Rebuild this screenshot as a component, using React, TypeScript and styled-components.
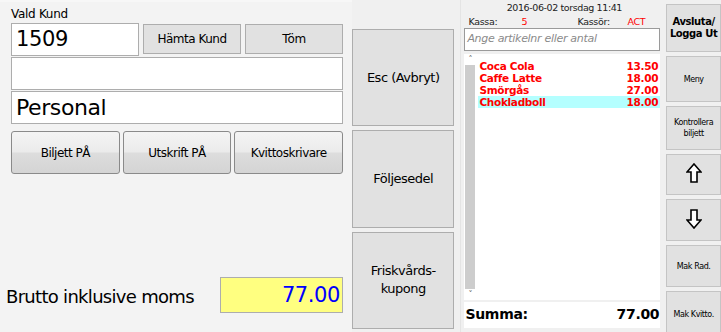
import React from 'react';
import styled, { createGlobalStyle } from 'styled-components';

const Global = createGlobalStyle`
  html, body { margin: 0; padding: 0; background: #f0f0f0; }
  * { box-sizing: border-box; }
  body { font-family: "DejaVu Sans", Tahoma, sans-serif; color: #000; }
`;

const Screen = styled.div`
  width: 721px;
  height: 332px;
  display: flex;
  background: #f0f0f0;
  overflow: hidden;
`;

const CustomerPanel = styled.div`
  width: 352px;
  display: flex;
  flex-direction: column;
  padding: 5px 9px 19px 11px;
  border-top: 2px solid #f7f7f7;
  background: #f3f3f3;
`;

const Label = styled.div`
  font-size: 12px;
  height: 16px;
  line-height: 14px;
  letter-spacing: -0.3px;
`;

const Row = styled.div`
  display: flex;
  gap: 4px;
  align-items: flex-start;
`;

const Field = styled.div<{ $w?: number; $size?: number }>`
  width: ${p => (p.$w ? `${p.$w}px` : '100%')};
  height: 33px;
  flex-shrink: 0;
  background: #fff;
  border: 1px solid #adadad;
  font-size: ${p => p.$size || 21}px;
  line-height: 31px;
  padding: 0 4px;
  letter-spacing: -0.4px;
`;

const FlatButton = styled.button`
  width: 98px;
  height: 30px;
  margin-top: 1px;
  background: #e1e1e1;
  border: 1px solid #adadad;
  font-family: "DejaVu Sans", Tahoma, sans-serif;
  font-size: 12px;
  letter-spacing: -0.5px;
  color: #000;
`;

const Stack = styled.div`
  display: flex;
  flex-direction: column;
  gap: 1px;
  margin-top: 1px;
`;

const ToggleRow = styled.div`
  display: grid;
  grid-template-columns: repeat(3, 1fr);
  gap: 3px;
  margin-top: 7px;
`;

const ToggleButton = styled.button`
  height: 43px;
  border: 1px solid #8a8a8a;
  border-radius: 3px;
  background: linear-gradient(#f4f4f4 0%, #ebebeb 48%, #dddddd 52%, #d4d4d4 100%);
  font-family: "DejaVu Sans", Tahoma, sans-serif;
  font-size: 12px;
  letter-spacing: -0.5px;
  color: #000;
`;

const Spacer = styled.div`
  flex: 1;
`;

const TotalRow = styled.div`
  display: flex;
  align-items: center;
  justify-content: space-between;
`;

const TotalLabel = styled.div`
  font-size: 18px;
  letter-spacing: -0.7px;
  margin-left: -5px;
  padding-top: 2px;
`;

const TotalValue = styled.div`
  width: 123px;
  height: 36px;
  background: #ffff80;
  border: 1px solid #adadad;
  color: #0000ff;
  font-size: 21px;
  line-height: 34px;
  text-align: right;
  padding-right: 2px;
  letter-spacing: -0.4px;
`;

const ActionColumn = styled.div`
  width: 103px;
  display: flex;
  flex-direction: column;
  gap: 4px;
  padding-top: 29px;
  padding-bottom: 3px;
`;

const BigButton = styled.button`
  flex: 1;
  background: #e1e1e1;
  border: 1px solid #adadad;
  font-family: "DejaVu Sans", Tahoma, sans-serif;
  font-size: 13px;
  line-height: 18px;
  letter-spacing: -0.5px;
  color: #000;
  padding: 0 6px;
`;

const Divider = styled.div`
  width: 7px;
  border-right: 1px solid #e4e4e4;
  margin-right: 3px;
`;

const ReceiptPanel = styled.div`
  width: 197px;
  display: flex;
  flex-direction: column;
  font-size: 10px;
`;

const DateLine = styled.div`
  text-align: center;
  height: 12px;
  line-height: 12px;
  margin-top: 2px;
  padding-left: 4px;
  font-size: 9.5px;
  letter-spacing: -0.4px;
  color: #222;
`;

const InfoLine = styled.div`
  display: grid;
  grid-template-columns: 53px 56px 50px 1fr;
  height: 13px;
  line-height: 13px;
  margin-top: 1px;
  padding-left: 4px;
  font-size: 9.5px;
  letter-spacing: -0.3px;
  color: #222;
`;

const Red = styled.span`
  color: #ff0000;
`;

const ArticleInput = styled.div`
  height: 23px;
  background: #fff;
  border: 1px solid #9a9a9a;
  font-size: 11px;
  font-style: italic;
  color: #8a8a8a;
  line-height: 20px;
  padding-left: 2px;
  letter-spacing: -0.3px;
`;

const ListBox = styled.div`
  flex: 1;
  margin-top: 3px;
  display: flex;
  background: #fff;
`;

const ScrollBar = styled.div`
  width: 12px;
  display: flex;
  flex-direction: column;
  align-items: center;
  background: #fff;
  padding: 2px 1px;
  gap: 2px;
`;

const Track = styled.div`
  flex: 1;
  width: 10px;
  background: #cdcdcd;
`;

const ScrollArrow = styled.div`
  font-size: 8px;
  line-height: 7px;
  color: #606060;
`;

const Items = styled.div`
  flex: 1;
  padding: 6px 0 0 2px;
`;

const Item = styled.div<{ $sel?: boolean }>`
  display: flex;
  justify-content: space-between;
  height: 12px;
  line-height: 12px;
  padding: 0 2px 0 1px;
  font-size: 10.5px;
  font-weight: bold;
  color: #ff0000;
  letter-spacing: -0.3px;
  background: ${p => (p.$sel ? '#b4ffff' : 'transparent')};
`;

const SumRow = styled.div`
  display: flex;
  justify-content: space-between;
  height: 26px;
  margin-top: 2px;
  margin-bottom: 4px;
  background: #fff;
  font-size: 14px;
  font-weight: bold;
  line-height: 24px;
  padding: 0 1px;
  letter-spacing: -0.3px;
`;

const SideColumn = styled.div`
  width: 55px;
  margin-left: 6px;
  display: flex;
  flex-direction: column;
  gap: 4px;
  padding-top: 4px;
`;

const SideButton = styled.button<{ $bold?: boolean; $h: number }>`
  height: ${p => p.$h}px;
  flex-shrink: 0;
  background: #e1e1e1;
  border: 1px solid #c4c4c4;
  font-family: "DejaVu Sans", Tahoma, sans-serif;
  font-size: ${p => (p.$bold ? 10 : 8)}px;
  font-weight: ${p => (p.$bold ? 'bold' : 'normal')};
  line-height: ${p => (p.$bold ? 12 : 11)}px;
  letter-spacing: -0.4px;
  color: #000;
  padding: 0 1px;
`;

const Arrow = styled.svg`
  width: 16px;
  height: 20px;
`;

const ArrowIcon = ({ down }: { down?: boolean }) => (
  <Arrow viewBox="0 0 16 20">
    <path
      d={down ? 'M5 1 H11 V11 H15 L8 19 L1 11 H5 Z' : 'M5 19 H11 V9 H15 L8 1 L1 9 H5 Z'}
      fill="#fff"
      stroke="#000"
      strokeWidth="1.6"
    />
  </Arrow>
);

const items = [
  { name: 'Coca Cola', price: '13.50' },
  { name: 'Caffe Latte', price: '18.00' },
  { name: 'Smörgås', price: '27.00' },
  { name: 'Chokladboll', price: '18.00', sel: true },
];

export default function App() {
  return (
    <>
      <Global />
      <Screen>
        <CustomerPanel>
          <Label>Vald Kund</Label>
          <Row>
            <Field $w={128}>1509</Field>
            <FlatButton>Hämta Kund</FlatButton>
            <FlatButton>Töm</FlatButton>
          </Row>
          <Stack>
            <Field />
            <Field $size={22}>Personal</Field>
          </Stack>
          <ToggleRow>
            <ToggleButton>Biljett PÅ</ToggleButton>
            <ToggleButton>Utskrift PÅ</ToggleButton>
            <ToggleButton>Kvittoskrivare</ToggleButton>
          </ToggleRow>
          <Spacer />
          <TotalRow>
            <TotalLabel>Brutto inklusive moms</TotalLabel>
            <TotalValue>77.00</TotalValue>
          </TotalRow>
        </CustomerPanel>

        <ActionColumn>
          <BigButton>Esc (Avbryt)</BigButton>
          <BigButton>Följesedel</BigButton>
          <BigButton>Friskvårds-<br />kupong</BigButton>
        </ActionColumn>

        <Divider />

        <ReceiptPanel>
          <DateLine>2016-06-02 torsdag 11:41</DateLine>
          <InfoLine>
            <span>Kassa:</span>
            <Red>5</Red>
            <span>Kassör:</span>
            <Red>ACT</Red>
          </InfoLine>
          <ArticleInput>Ange artikelnr eller antal</ArticleInput>
          <ListBox>
            <ScrollBar>
              <ScrollArrow>˄</ScrollArrow>
              <Track />
              <ScrollArrow>˅</ScrollArrow>
            </ScrollBar>
            <Items>
              {items.map(it => (
                <Item key={it.name} $sel={it.sel}>
                  <span>{it.name}</span>
                  <span>{it.price}</span>
                </Item>
              ))}
            </Items>
          </ListBox>
          <SumRow>
            <span>Summa:</span>
            <span>77.00</span>
          </SumRow>
        </ReceiptPanel>

        <SideColumn>
          <SideButton $bold $h={48}>Avsluta/<br />Logga Ut</SideButton>
          <SideButton $h={46}>Meny</SideButton>
          <SideButton $h={44}>Kontrollera<br />biljett</SideButton>
          <SideButton $h={41}><ArrowIcon /></SideButton>
          <SideButton $h={42}><ArrowIcon down /></SideButton>
          <SideButton $h={42}>Mak Rad.</SideButton>
          <SideButton $h={46}>Mak Kvitto.</SideButton>
        </SideColumn>
      </Screen>
    </>
  );
}
